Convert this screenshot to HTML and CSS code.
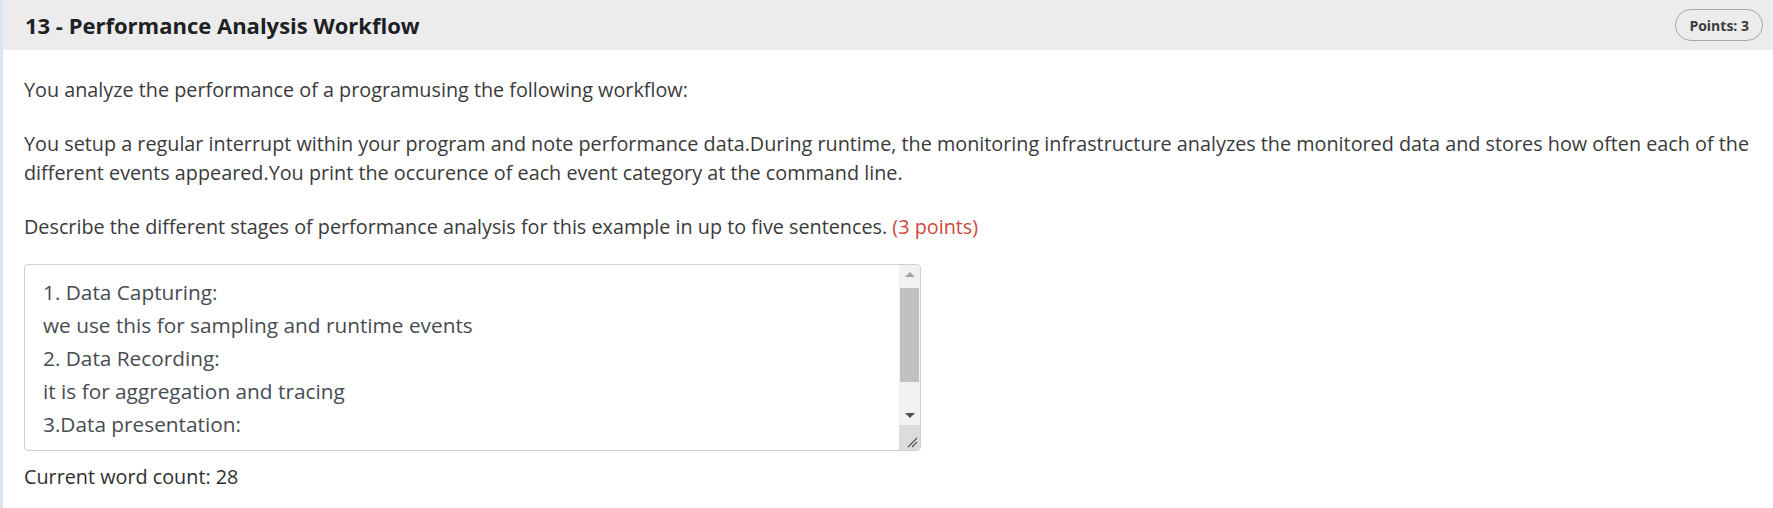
FILE: index.html
```html
<!DOCTYPE html>
<html lang="en">
<head>
<meta charset="utf-8">
<title>13 - Performance Analysis Workflow</title>
<link rel="stylesheet" href="styles.css">
</head>
<body>
<div class="question">
  <div class="q-header">
    <h3 class="q-title">13 - Performance Analysis Workflow</h3>
    <span class="badge">Points: 3</span>
  </div>
  <div class="q-body">
    <p class="q-text">You analyze the performance of a programusing the following workflow:</p>
    <p class="q-text">You setup a regular interrupt within your program and note performance data.During runtime, the monitoring infrastructure analyzes the monitored data and stores how often each of the different events appeared.You print the occurence of each event category at the command line.</p>
    <p class="q-text q-last">Describe the different stages of performance analysis for this example in up to five sentences. <span class="pts">(3 points)</span></p>
    <div class="answer">
      <div class="answer-text">
        <div class="line">1. Data Capturing:</div>
        <div class="line">we use this for sampling and runtime events</div>
        <div class="line">2. Data Recording:</div>
        <div class="line">it is for aggregation and tracing</div>
        <div class="line">3.Data presentation:</div>
      </div>
      <div class="scrollbar">
        <div class="sb-btn"><span class="arrow-up"></span></div>
        <div class="sb-track"><div class="sb-thumb"></div></div>
        <div class="sb-btn"><span class="arrow-down"></span></div>
        <div class="sb-corner">
          <svg width="12" height="12" viewBox="0 0 12 12"><path d="M2 11 L11 2 M6 11 L11 6" stroke="#555" stroke-width="1.2" fill="none"/></svg>
        </div>
      </div>
    </div>
    <div class="wordcount">Current word count: 28</div>
  </div>
</div>
</body>
</html>
```

FILE: styles.css
```css
html, body {
  margin: 0;
  padding: 0;
  background: #ffffff;
}
body {
  font-family: "Open Sans", "Noto Sans", sans-serif;
  color: #3a3a3a;
}
.question {
  border-left: 3px solid #dde3f0;
  min-height: 508px;
  box-sizing: border-box;
}
.q-header {
  height: 50px;
  background: #ececec;
  display: flex;
  align-items: center;
  justify-content: space-between;
  padding: 0 10px 0 22px;
}
.q-title {
  margin: 0;
  font-size: 22px;
  font-weight: 700;
  line-height: 50px;
  color: #1d2125;
}
.badge {
  display: inline-flex;
  align-items: center;
  height: 32px;
  box-sizing: border-box;
  padding: 0 13px;
  border: 1px solid #a8a8a8;
  border-radius: 17px;
  font-size: 14px;
  font-weight: 700;
  color: #3c3c3c;
}
.q-body {
  padding: 25px 20px 0 21px;
}
.q-text {
  margin: 0 0 25px 0;
  font-size: 19.8px;
  line-height: 29px;
}
.q-text.q-last {
  margin-bottom: 23px;
}
.pts {
  color: #d0473c;
}
.answer {
  display: flex;
  width: 897px;
  height: 187px;
  box-sizing: border-box;
  border: 1px solid #cfcfcf;
  border-radius: 4px;
  overflow: hidden;
  background: #fff;
}
.answer-text {
  flex: 1;
  padding: 11px 18px 0 18px;
  font-size: 20.8px;
  line-height: 33px;
  color: #474c52;
  overflow: hidden;
}
.scrollbar {
  width: 21px;
  display: flex;
  flex-direction: column;
  background: #f1f1f1;
}
.sb-btn {
  height: 21px;
  display: flex;
  align-items: center;
  justify-content: center;
}
.arrow-up {
  width: 0;
  height: 0;
  border-left: 5px solid transparent;
  border-right: 5px solid transparent;
  border-bottom: 5px solid #a3a3a3;
}
.arrow-down {
  width: 0;
  height: 0;
  border-left: 5px solid transparent;
  border-right: 5px solid transparent;
  border-top: 5px solid #505050;
}
.sb-track {
  flex: 1;
  padding: 4px 1px 24px 1px;
  display: flex;
  flex-direction: column;
}
.sb-thumb {
  height: 94px;
  background: #c1c1c1;
}
.sb-corner {
  height: 25px;
  background: #dcdcdc;
  display: flex;
  align-items: flex-end;
  justify-content: flex-end;
  padding: 0 2px 2px 0;
}
.wordcount {
  margin-top: 11px;
  font-size: 19.8px;
  line-height: 29px;
  color: #2f2f2f;
}
```
